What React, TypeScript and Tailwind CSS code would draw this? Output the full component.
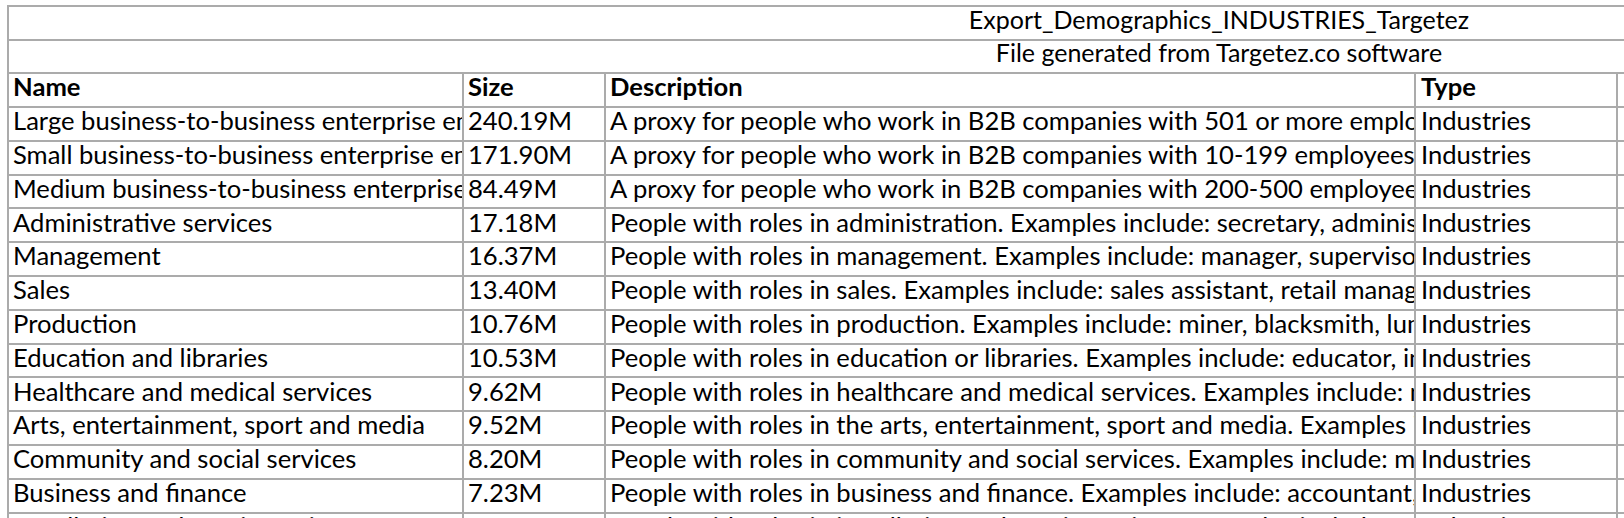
import React from "react";

type Row = { name: string; size: string; desc: string; type: string };

const rows: Row[] = [
  { name: "Large business-to-business enterprise employees (501+)", size: "240.19M", desc: "A proxy for people who work in B2B companies with 501 or more employees. This audience is built on job and company information", type: "Industries" },
  { name: "Small business-to-business enterprise employees (10-199)", size: "171.90M", desc: "A proxy for people who work in B2B companies with 10-199 employees, built on job and company information", type: "Industries" },
  { name: "Medium business-to-business enterprise employees (200 - 500)", size: "84.49M", desc: "A proxy for people who work in B2B companies with 200-500 employees. This audience is built on job information", type: "Industries" },
  { name: "Administrative services", size: "17.18M", desc: "People with roles in administration. Examples include: secretary, administrative assistant, receptionist", type: "Industries" },
  { name: "Management", size: "16.37M", desc: "People with roles in management. Examples include: manager, supervisor, director", type: "Industries" },
  { name: "Sales", size: "13.40M", desc: "People with roles in sales. Examples include: sales assistant, retail manager, cashier", type: "Industries" },
  { name: "Production", size: "10.76M", desc: "People with roles in production. Examples include: miner, blacksmith, lumberjack, machinist", type: "Industries" },
  { name: "Education and libraries", size: "10.53M", desc: "People with roles in education or libraries. Examples include: educator, instructor, librarian", type: "Industries" },
  { name: "Healthcare and medical services", size: "9.62M", desc: "People with roles in healthcare and medical services. Examples include:  nurse, doctor, dentist", type: "Industries" },
  { name: "Arts, entertainment, sport and media", size: "9.52M", desc: "People with roles in the arts, entertainment, sport and media. Examples include: artist, athlete", type: "Industries" },
  { name: "Community and social services", size: "8.20M", desc: "People with roles in community and social services. Examples include: minister, social worker", type: "Industries" },
  { name: "Business and finance", size: "7.23M", desc: "People with roles in business and finance. Examples include: accountant, financial analyst", type: "Industries" },
  { name: "Installation and repair services", size: "6.83M", desc: "People with roles in installation and repair services. Examples include: mechanic, electrician", type: "Industries" },
];

const cell = "flex items-end overflow-hidden whitespace-nowrap pl-[4px] pb-[6px] leading-none shrink-0 border-r-2 border-[#ababab]";

function DataRow({ r, header }: { r: Row; header?: boolean }) {
  const weight = header ? "font-bold" : "font-normal";
  return (
    <div className={`flex ${header ? "h-[34px]" : "h-[33.8px]"} border-l-2 border-b-2 border-[#ababab] ${weight}`}>
      <div className={`${cell} w-[455px]`}>{r.name}</div>
      <div className={`${cell} w-[142px]`}>{r.size}</div>
      <div className={`${cell} w-[810px]`}>{r.desc}</div>
      <div className={`${cell} w-[202px] pl-[5px]`}>{r.type}</div>
      <div className="flex-1" />
    </div>
  );
}

function TitleRow({ text, top }: { text: string; top?: boolean }) {
  return (
    <div className={`flex overflow-hidden border-l-2 border-b-2 border-[#ababab] ${top ? "border-t-2 h-[35.5px]" : "h-[33.5px]"}`}>
      <div className="flex w-[2420px] shrink-0 items-end justify-center pb-[7px] leading-none whitespace-nowrap text-[25px]">
        {text}
      </div>
    </div>
  );
}

export default function App() {
  return (
    <div
      className="w-[1624px] h-[518px] overflow-hidden bg-white pt-[5px] pl-[7px] text-[25.6px] text-black"
      style={{ fontFamily: "Lato, 'Open Sans', sans-serif" }}
    >
      <TitleRow text="Export_Demographics_INDUSTRIES_Targetez" top />
      <TitleRow text="File generated from Targetez.co software" />
      <DataRow header r={{ name: "Name", size: "Size", desc: "Description", type: "Type" }} />
      {rows.map((r) => (
        <DataRow key={r.name} r={r} />
      ))}
    </div>
  );
}
